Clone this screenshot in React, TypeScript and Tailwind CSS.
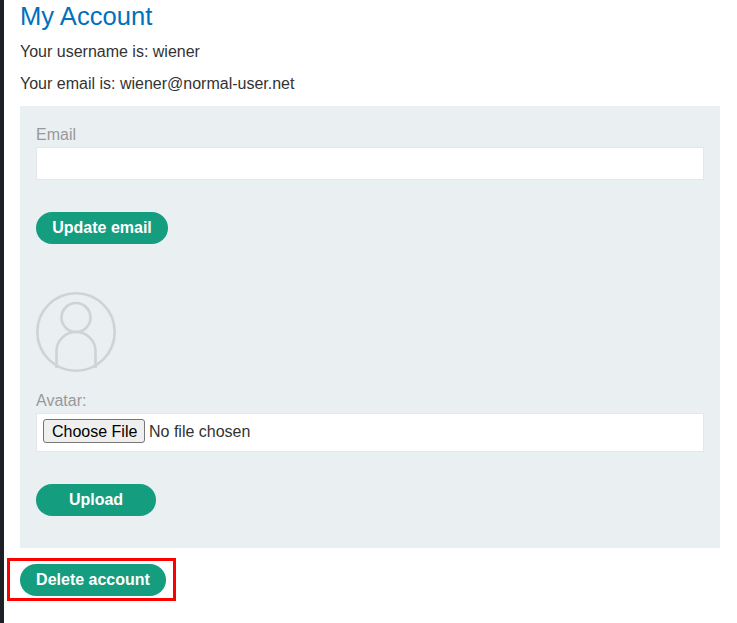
const App = () => {
  return (
    <div className="flex min-h-[623px] bg-white font-['Liberation_Sans',Arial,sans-serif] text-base text-[#333332]">
      <div className="w-[4px] shrink-0 bg-[#1c1f24]" />
      <div className="pl-4 w-[716px]">
        <h1 className="text-[25.6px] leading-[30px] mt-[1px] text-[#0071bc]">My Account</h1>
        <p className="mt-[12px] leading-[18px]">Your username is: wiener</p>
        <p className="mt-[14px] leading-[18px]">Your email is: wiener@normal-user.net</p>
        <div className="mt-[13px] h-[442px] bg-[#eaeff2] p-4">
          <label className="block h-[25px] leading-[25px] text-[#999999]">Email</label>
          <input
            type="email"
            className="block w-full h-[33px] bg-white border border-[#e6e6e6] outline-none"
          />
          <button className="mt-8 block w-[132px] h-8 rounded-[25px] bg-[#159d80] text-white font-bold">
            Update email
          </button>
          <svg className="mt-12 block" width="80" height="80" viewBox="0 0 80 80" fill="none" stroke="#cfd3d5" strokeWidth="2.6">
            <circle cx="40" cy="40" r="38.7" />
            <circle cx="40" cy="25.5" r="14.5" />
            <path d="M20.5 76V59a19.5 19 0 0 1 39 0V76" />
          </svg>
          <label className="block mt-[18px] h-[23px] leading-[22px] text-[#999999]">Avatar:</label>
          <div className="h-[39px] bg-white border border-[#e6e6e6] pl-[6px] pt-[5px]">
            <input type="file" className="block text-base text-[#333332] [&::file-selector-button]:border [&::file-selector-button]:border-[#767676] [&::file-selector-button]:bg-[#efefef] [&::file-selector-button]:rounded-[3px] [&::file-selector-button]:px-2 [&::file-selector-button]:h-[24px] [&::file-selector-button]:w-[102px] [&::file-selector-button]:mr-1 [&::file-selector-button]:text-black" />
          </div>
          <button className="mt-8 block w-[120px] h-8 rounded-[25px] bg-[#159d80] text-white font-bold">
            Upload
          </button>
        </div>
        <div className="relative mt-4 w-[146px]">
          <button className="block w-[146px] h-8 rounded-[25px] bg-[#159d80] text-white font-bold">
            Delete account
          </button>
          <div className="absolute left-[-13px] top-[-6px] w-[169px] h-[43px] border-[3px] border-[#ff0000]" />
        </div>
      </div>
    </div>
  );
};

export default App;
